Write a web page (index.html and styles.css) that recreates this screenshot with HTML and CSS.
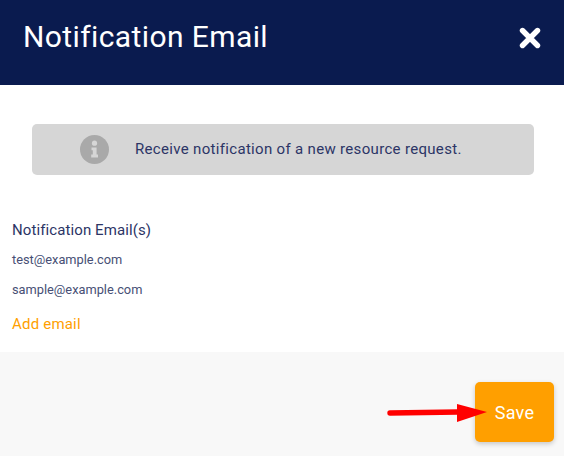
FILE: index.html
```html
<!DOCTYPE html>
<html lang="en">
<head>
  <meta charset="UTF-8">
  <title>Notification Email</title>
  <link rel="stylesheet" href="styles.css">
</head>
<body>
  <div class="modal">
    <div class="modal-header">
      <h1>Notification Email</h1>
      <svg class="close" width="22" height="22" viewBox="0 0 22 22" aria-label="Close">
        <path d="M3.5 3.5 L18.5 18.5 M18.5 3.5 L3.5 18.5" stroke="#fff" stroke-width="5.4" stroke-linecap="round"/>
      </svg>
    </div>
    <div class="modal-body">
      <div class="alert">
        <svg class="alert-icon" width="29" height="29" viewBox="0 0 29 29">
          <circle cx="14.5" cy="14.5" r="14.5" fill="#a9a9a9"/>
          <circle cx="14.5" cy="8.2" r="2.6" fill="#d6d6d6"/>
          <path d="M11.5 12.5 H16.6 V19.6 H18 V22.4 H11.2 V19.6 H12.8 V15.2 H11.5 Z" fill="#d6d6d6"/>
        </svg>
        <span>Receive notification of a new resource request.</span>
      </div>
      <div class="field-label">Notification Email(s)</div>
      <div class="email">test@example.com</div>
      <div class="email">sample@example.com</div>
      <a class="add-email" href="#">Add email</a>
    </div>
    <div class="modal-footer">
      <svg class="arrow" width="102" height="24" viewBox="0 0 102 24">
        <path d="M5 12 L73 11" stroke="#f00" stroke-width="5.4" stroke-linecap="round"/>
        <path d="M72 3 L102 11 L72 21 Z" fill="#f00"/>
      </svg>
      <button class="save">Save</button>
    </div>
  </div>
</body>
</html>
```

FILE: styles.css
```css
html, body {
  margin: 0;
  padding: 0;
}
body {
  font-family: Roboto, "Open Sans", sans-serif;
  background-color: #fff;
}
.modal {
  width: 564px;
  height: 456px;
  display: flex;
  flex-direction: column;
  overflow: hidden;
}
.modal-header {
  height: 85px;
  box-sizing: border-box;
  background-color: #0a1b4f;
  color: #fff;
  display: flex;
  justify-content: space-between;
  padding: 21px 23px 0 23px;
}
.modal-header h1 {
  margin: 0;
  font-size: 30px;
  line-height: 32px;
  font-weight: 400;
  letter-spacing: 0.4px;
}
.close {
  margin-top: 6px;
}
.modal-body {
  height: 267px;
  box-sizing: border-box;
  padding: 39px 12px 0 12px;
}
.alert {
  margin: 0 18px 44px 20px;
  height: 50px;
  padding-bottom: 1px;
  background-color: #d6d6d6;
  border-radius: 5px;
  display: flex;
  align-items: center;
  padding-left: 48px;
  gap: 26px;
  color: #2c3566;
  font-size: 15px;
  letter-spacing: 0.32px;
}
.field-label {
  font-size: 15px;
  line-height: 22px;
  letter-spacing: 0.1px;
  color: #2c3566;
}
.email {
  font-size: 12.8px;
  line-height: 30px;
  color: #474f75;
}
.field-label + .email {
  margin-top: 4px;
}
.add-email {
  display: block;
  margin-top: 8px;
  font-size: 15px;
  line-height: 22px;
  letter-spacing: 0.2px;
  color: #ffa000;
  text-decoration: none;
}
.modal-footer {
  flex: 1;
  background-color: #f8f8f8;
  display: flex;
  justify-content: flex-end;
  align-items: flex-start;
  padding: 30px 10px 0 0;
}
.arrow {
  position: relative;
  margin-top: 19px;
  margin-right: -12px;
}
.save {
  width: 79px;
  height: 60px;
  border: none;
  border-radius: 5px;
  background-color: #ff9f00;
  color: #fff;
  font-family: inherit;
  font-size: 18px;
  font-weight: 400;
  letter-spacing: 0.3px;
  box-shadow: 0 2px 5px rgba(0, 0, 0, 0.2);
}
```
